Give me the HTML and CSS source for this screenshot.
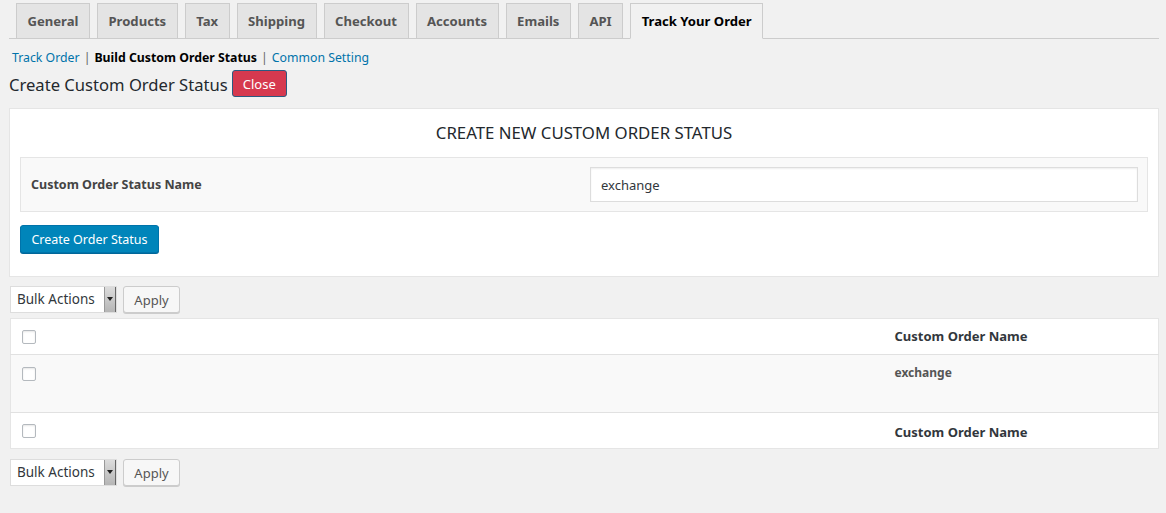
FILE: index.html
```html
<!DOCTYPE html>
<html>
<head>
<meta charset="utf-8">
<link rel="stylesheet" href="styles.css">
</head>
<body>
<div class="wrap">
  <nav class="tabs">
    <a class="tab">General</a>
    <a class="tab">Products</a>
    <a class="tab">Tax</a>
    <a class="tab">Shipping</a>
    <a class="tab">Checkout</a>
    <a class="tab">Accounts</a>
    <a class="tab">Emails</a>
    <a class="tab">API</a>
    <a class="tab active">Track Your Order</a>
  </nav>
  <div class="subnav">
    <a class="link">Track Order</a><span class="sep">|</span><b class="current">Build Custom Order Status</b><span class="sep">|</span><a class="link">Common Setting</a>
  </div>
  <div class="heading">
    <h2 class="title">Create Custom Order Status</h2>
    <button class="btn-close">Close</button>
  </div>
  <section class="panel">
    <h3 class="panel-title">CREATE NEW CUSTOM ORDER STATUS</h3>
    <div class="form-row">
      <label class="form-label">Custom Order Status Name</label>
      <div class="form-field"><input class="text-input" type="text" value="exchange"></div>
    </div>
    <button class="btn-primary">Create Order Status</button>
  </section>
  <div class="bulk">
    <div class="select"><span class="select-text">Bulk Actions</span><span class="select-arrow"></span></div>
    <button class="btn-apply">Apply</button>
  </div>
  <table class="list">
    <thead>
      <tr><td class="cb"><span class="checkbox"></span></td><td class="spacer"></td><th class="name">Custom Order Name</th></tr>
    </thead>
    <tbody>
      <tr class="row"><td class="cb top"><span class="checkbox"></span></td><td class="spacer"></td><td class="name value">exchange</td></tr>
    </tbody>
    <tfoot>
      <tr><td class="cb"><span class="checkbox"></span></td><td class="spacer"></td><th class="name">Custom Order Name</th></tr>
    </tfoot>
  </table>
  <div class="bulk bottom">
    <div class="select"><span class="select-text">Bulk Actions</span><span class="select-arrow"></span></div>
    <button class="btn-apply">Apply</button>
  </div>
</div>
</body>
</html>
```
FILE: styles.css
```css
* { box-sizing: border-box; }
html, body { margin: 0; padding: 0; }
body {
  background: #f1f1f1;
  font-family: "Noto Sans", "Open Sans", sans-serif;
  color: #444;
  font-size: 13px;
  width: 1166px;
  height: 513px;
  overflow: hidden;
}
.wrap { padding: 0 8px 0 9px; }

.tabs {
  display: flex;
  border-bottom: 1px solid #ccc;
  padding-top: 3px;
  width: 1150px;
}
.tab {
  margin-left: 7px;
  margin-bottom: -1px;
  padding: 0 10.5px;
  height: 36px;
  line-height: 34px;
  border: 1px solid #ccc;
  background: #e4e4e4;
  font-size: 13.1px;
  font-weight: 700;
  color: #555;
  white-space: nowrap;
}
.tab.active {
  background: #f1f1f1;
  border-bottom-color: #f1f1f1;
  color: #000;
}

.subnav {
  margin-top: 9px;
  padding-left: 3px;
  font-size: 12.3px;
  line-height: 20px;
  color: #666;
}
.link { color: #0073aa; }
.sep { margin: 0 4px; color: #666; }
.current { color: #000; font-weight: 700; }

.heading {
  display: flex;
  align-items: center;
  margin-top: 1px;
  height: 29px;
}
.title {
  margin: 0 4px 0 0;
  font-size: 16.6px;
  font-weight: 400;
  color: #23282d;
  line-height: 24px;
  position: relative;
  top: 1px;
}
.btn-close {
  height: 27px;
  width: 55px;
  padding: 0;
  border: 1px solid #2b5a80;
  border-radius: 3px;
  background: #d6394f;
  color: #fff;
  font-family: inherit;
  font-size: 13px;
  line-height: 24px;
}

.panel {
  margin-top: 10px;
  width: 1150px;
  background: #fff;
  border: 1px solid #e5e5e5;
  padding: 13px 10px 23px 10px;
}
.panel-title {
  margin: 0;
  text-align: center;
  font-size: 16.8px;
  font-weight: 400;
  color: #23282d;
  line-height: 22px;
  height: 35px;
}
.form-row {
  display: flex;
  align-items: center;
  background: #f9f9f9;
  border: 1px solid #e5e5e5;
  height: 55px;
}
.form-label {
  width: 569px;
  padding-left: 10px;
  font-weight: 700;
  font-size: 12.5px;
  color: #444;
}
.form-field { flex: 1; padding-right: 9px; }
.text-input {
  width: 100%;
  height: 35px;
  border: 1px solid #ddd;
  box-shadow: inset 0 1px 2px rgba(0,0,0,0.07);
  background: #fff;
  padding: 0 10px;
  font-family: inherit;
  font-size: 13px;
  color: #32373c;
  outline: none;
}
.btn-primary {
  margin-top: 13px;
  height: 28px;
  width: 139px;
  padding: 0;
  background: #0085ba;
  border: 1px solid #0073aa;
  border-radius: 3px;
  box-shadow: 0 1px 0 #006799;
  color: #fff;
  font-family: inherit;
  font-size: 12.5px;
}

.bulk {
  display: flex;
  gap: 6px;
  margin-top: 9px;
  padding-left: 1px;
}
.bulk.bottom { margin-top: 10px; }
.select {
  display: flex;
  width: 107px;
  height: 27px;
  background: #fff;
  border: 1px solid #ddd;
}
.select-text {
  flex: 1;
  padding-left: 6px;
  line-height: 25px;
  font-size: 13.5px;
  color: #32373c;
  white-space: nowrap;
}
.select-arrow {
  width: 12px;
  background: linear-gradient(#dcdcdc, #b5b5b5);
  border-left: 1px solid #999;
  border-right: 1px solid #666;
  position: relative;
}
.select-arrow::after {
  content: "";
  position: absolute;
  left: 2px;
  top: 10px;
  border-left: 3px solid transparent;
  border-right: 3px solid transparent;
  border-top: 4px solid #222;
}
.btn-apply {
  height: 27px;
  width: 57px;
  padding: 0;
  background: #f7f7f7;
  border: 1px solid #ccc;
  border-radius: 3px;
  box-shadow: 0 1px 0 #ccc;
  color: #555;
  font-family: inherit;
  font-size: 13px;
}

.list {
  margin-top: 5px;
  width: 1149px;
  margin-left: 1px;
  border-collapse: collapse;
  background: #fff;
  border: 1px solid #e5e5e5;
}
.list td, .list th { padding: 0; }
.list thead tr { height: 36px; border-bottom: 1px solid #e1e1e1; }
.list tfoot tr { height: 36px; border-top: 1px solid #e1e1e1; }
.row { background: #f9f9f9; height: 58px; }
.cb { width: 40px; padding-left: 11px !important; vertical-align: middle; }
.cb.top { vertical-align: top; padding-top: 12px !important; }
.checkbox {
  display: block;
  width: 14px;
  height: 14px;
  border: 1px solid #b4b9be;
  border-radius: 2px;
  background: #fff;
  box-shadow: inset 0 1px 2px rgba(0,0,0,0.1);
}
.spacer { width: 844px; }
.name {
  text-align: left;
  font-weight: 700;
  font-size: 13px;
  color: #32373c;
}
.list thead .name { padding-bottom: 2px; }
.list tfoot .name { padding-top: 2px; }
.value {
  vertical-align: top;
  padding-top: 9px !important;
  font-size: 12px;
  color: #555;
}
```
